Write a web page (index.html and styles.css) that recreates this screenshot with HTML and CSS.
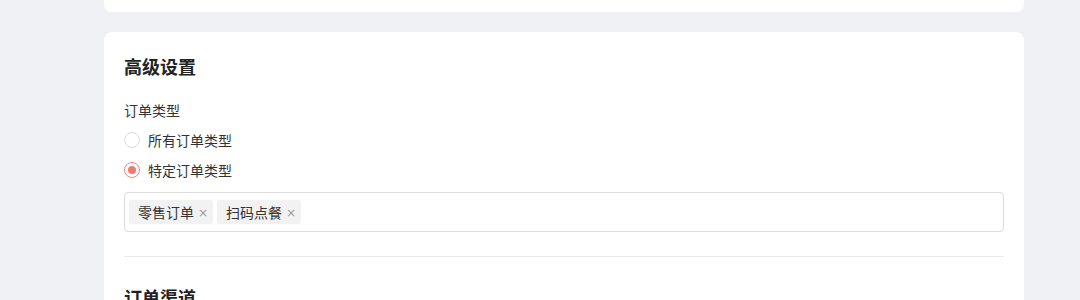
FILE: index.html
```html
<!DOCTYPE html>
<html lang="zh">
<head>
<meta charset="utf-8">
<link rel="stylesheet" href="styles.css">
</head>
<body>
<div class="page">
  <div class="card card-top"></div>
  <div class="card">
    <h2 class="section-title">高级设置</h2>
    <div class="field-label">订单类型</div>
    <div class="radio-group">
      <label class="radio"><span class="radio-circle"></span><span class="radio-text">所有订单类型</span></label>
      <label class="radio checked"><span class="radio-circle"></span><span class="radio-text">特定订单类型</span></label>
    </div>
    <div class="tag-input">
      <span class="tag">零售订单<span class="tag-close">×</span></span>
      <span class="tag">扫码点餐<span class="tag-close">×</span></span>
    </div>
    <div class="divider"></div>
    <h2 class="section-title">订单渠道</h2>
  </div>
</div>
</body>
</html>
```
FILE: styles.css
```css
html, body {
  margin: 0;
  padding: 0;
  background: #f0f1f5;
  font-family: "Noto Sans CJK SC", "Noto Sans", sans-serif;
  color: #333;
  overflow: hidden;
}
.page {
  width: 920px;
  margin-left: 104px;
  display: flex;
  flex-direction: column;
  gap: 20px;
}
.card {
  background: #fff;
  border-radius: 8px;
  padding: 18px 20px 40px;
}
.card-top {
  height: 12px;
  padding: 0;
  border-radius: 0 0 8px 8px;
}
.section-title {
  margin: 0;
  font-size: 18px;
  line-height: 32px;
  font-weight: 700;
  color: #222;
}
.field-label {
  margin-top: 18px;
  font-size: 14px;
  line-height: 20px;
  color: #333;
}
.radio-group {
  display: flex;
  flex-direction: column;
  margin-top: 5px;
}
.radio {
  display: flex;
  align-items: center;
  height: 30px;
  font-size: 14px;
  color: #333;
}
.radio-circle {
  width: 16px;
  height: 16px;
  box-sizing: border-box;
  border: 1px solid #dcdcdc;
  border-radius: 50%;
  margin-right: 8px;
  display: flex;
  align-items: center;
  justify-content: center;
}
.radio.checked .radio-circle {
  border-color: #f2857d;
}
.radio.checked .radio-circle::after {
  content: "";
  width: 8px;
  height: 8px;
  border-radius: 50%;
  background: #ef7b73;
}
.tag-input {
  margin-top: 7px;
  height: 40px;
  box-sizing: border-box;
  border: 1px solid #dcdcdc;
  border-radius: 4px;
  padding: 0 4px;
  display: flex;
  align-items: center;
  gap: 4px;
}
.tag {
  display: inline-flex;
  align-items: center;
  height: 24px;
  padding: 0 5px 0 9px;
  background: #f2f2f2;
  border-radius: 2px;
  font-size: 14px;
  color: #333;
}
.tag-close {
  margin-left: 4px;
  font-size: 12px;
  color: #999;
  font-family: "DejaVu Sans", sans-serif;
  line-height: 1;
  position: relative;
  top: 1px;
}
.divider {
  margin: 24px 0;
  height: 1px;
  background: #ebebeb;
}
```
